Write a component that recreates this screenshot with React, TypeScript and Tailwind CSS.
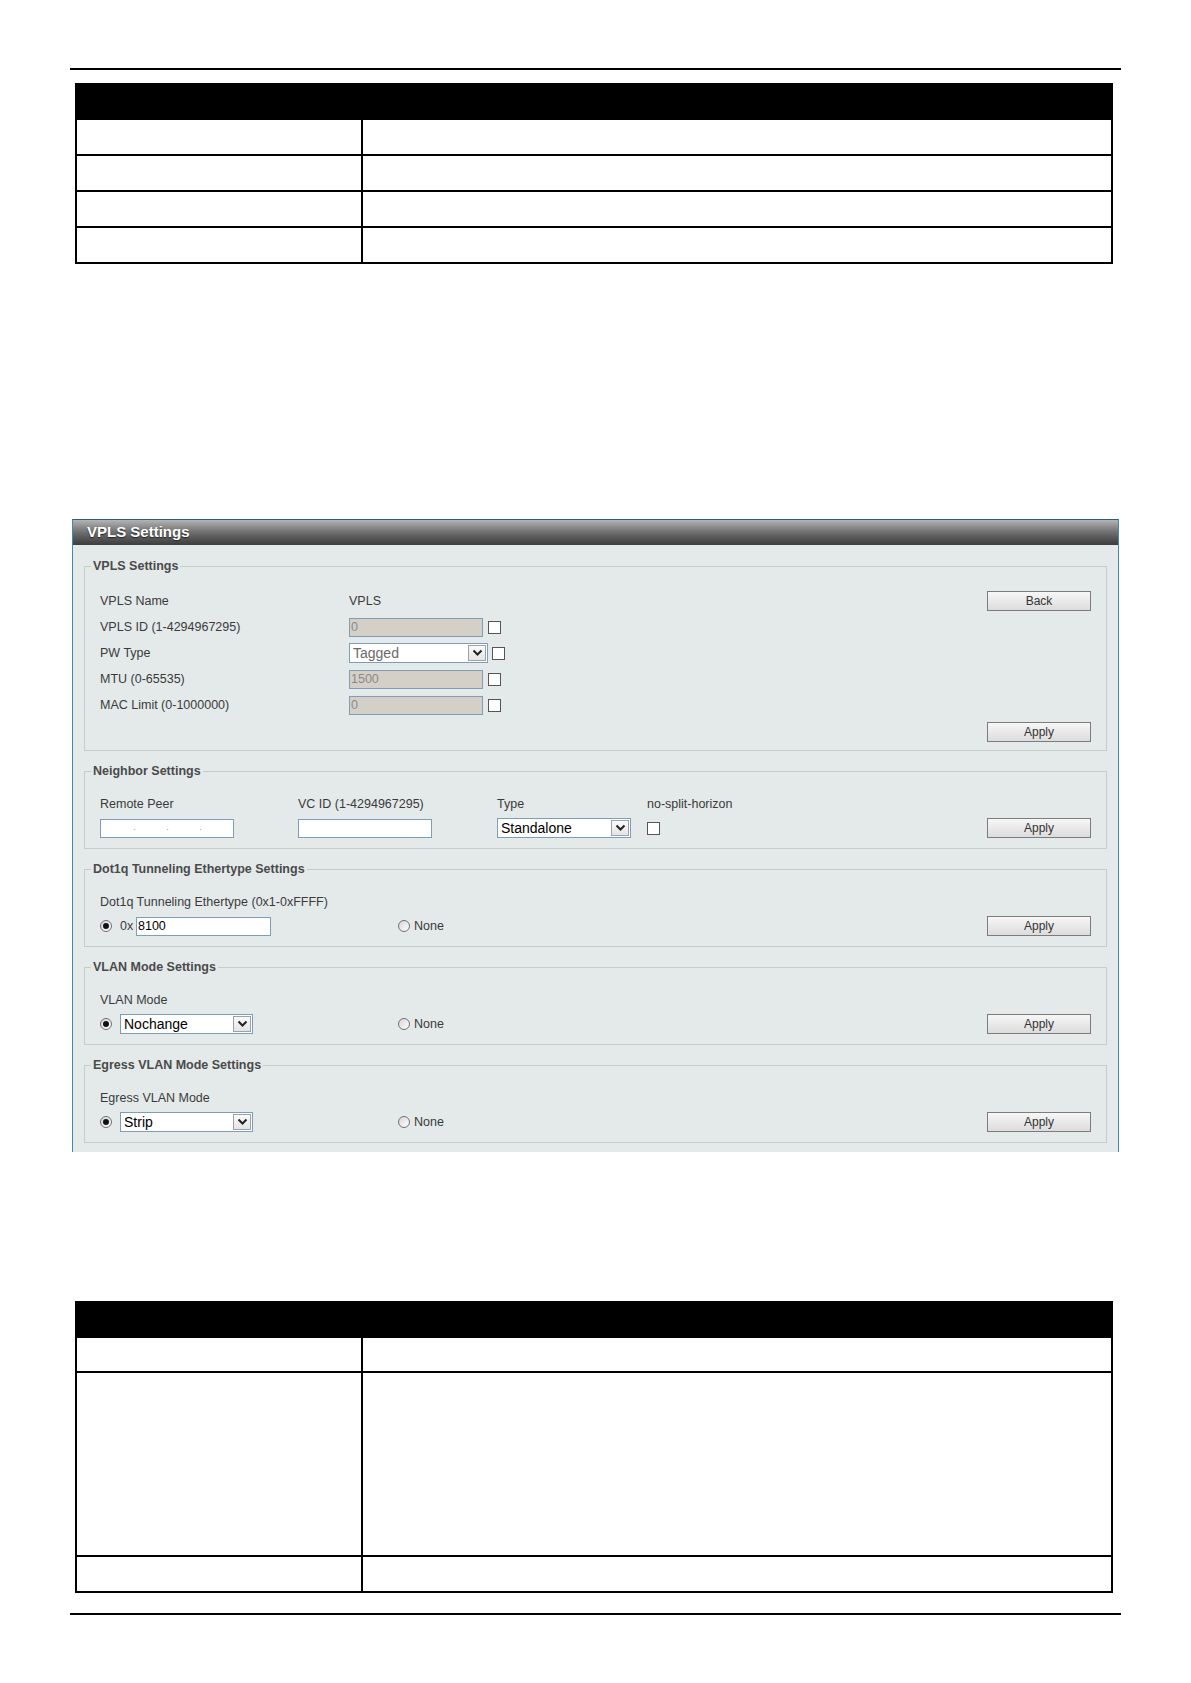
import React from 'react'

const sans = "font-['Liberation_Sans',Arial,sans-serif]"

function CheckBox() {
    return <span className="block w-[13px] h-[13px] border border-[#555] bg-white shrink-0" />
}

function Radio({ on }: { on?: boolean }) {
    return (
        <span className="inline-flex w-[12px] h-[12px] rounded-full border border-[#707070] bg-gradient-to-br from-[#d6d6d6] to-white items-center justify-center shrink-0">
            {on && <span className="w-[6px] h-[6px] rounded-full bg-[#111]" />}
        </span>
    )
}

function Btn({ label }: { label: string }) {
    return (
        <div className="w-[104px] h-[20px] border border-[#7c7c7c] bg-gradient-to-b from-[#f7f7f7] to-[#dcdcdc] flex items-center justify-center text-[12px] text-[#333] shrink-0">
            {label}
        </div>
    )
}

function TextBox({ w, value, disabled }: { w: string; value?: React.ReactNode; disabled?: boolean }) {
    return (
        <div className={`${w} h-[19px] border border-[#7f9db9] flex items-center pl-[1px] text-[12.5px] shrink-0 ${disabled ? 'bg-[#d4d0c8] text-[#8a8a8a]' : 'bg-white text-black'}`}>
            {value}
        </div>
    )
}

function Select({ w, value, gray }: { w: string; value: string; gray?: boolean }) {
    return (
        <div className={`${w} h-[20px] border border-[#7f9db9] bg-white flex items-center justify-between pl-[3px] pr-[1px] shrink-0`}>
            <span className={`text-[14px] ${gray ? 'text-[#6a6a6a]' : 'text-black'}`}>{value}</span>
            <span className="w-[18px] h-[16px] border border-[#9aa3ad] bg-gradient-to-b from-[#fafafa] to-[#e4e4e4] flex items-center justify-center">
                <svg width="11" height="8" viewBox="0 0 11 8">
                    <path d="M1.5 1.5 L5.5 5.5 L9.5 1.5" fill="none" stroke="#222" strokeWidth="2" />
                </svg>
            </span>
        </div>
    )
}

function Group({ title, children }: { title: string; children: React.ReactNode }) {
    return (
        <fieldset className="border border-[#c6cccc] mt-[12px] first:mt-0">
            <legend className="ml-[6px] px-[2px] text-[12.5px] leading-[16px] font-bold text-[#4a4a4a]">{title}</legend>
            <div className="px-[15px]">{children}</div>
        </fieldset>
    )
}

function Table({ rows }: { rows: number[] }) {
    return (
        <div className="ml-[75px] w-[1038px] border-2 border-black">
            <div className="h-[33px] bg-black" />
            {rows.map((h, i) => (
                <div key={i} className="flex border-t-2 border-black" style={{ height: h }}>
                    <div className="w-[286px] border-r-2 border-black" />
                    <div className="flex-1" />
                </div>
            ))}
        </div>
    )
}

export default function App() {
    return (
        <div className={`${sans} w-[1191px] h-[1683px] bg-white pt-[68px]`}>
            <div className="ml-[70px] w-[1051px] h-[2px] bg-black" />

            <div className="mt-[13px]">
                <Table rows={[36, 36, 36, 36]} />
            </div>

            {/* settings panel */}
            <div className="ml-[72px] mt-[255px] w-[1047px] border-x border-t border-x-[#4686b6] border-t-[#2e5d7c] bg-[#e4eaea]">
                <div className="h-[25px] bg-gradient-to-b from-[#b4b4b4] via-[#6e6e6e] to-[#3c3c3c] flex items-center pl-[14px]">
                    <span className="text-[15px] font-bold text-white [text-shadow:0_1px_1px_#222]">VPLS Settings</span>
                </div>

                <div className="px-[11px] pt-[13px] pb-[9px] text-[12.5px] text-[#3a3a3a]">
                    <Group title="VPLS Settings">
                        <div className="pt-[14px] pb-[8px]">
                            <div className="flex">
                                <div className="flex-1">
                                    <div className="h-[26px] flex items-center">
                                        <span className="w-[249px]">VPLS Name</span>
                                        <span>VPLS</span>
                                    </div>
                                    <div className="h-[26px] flex items-center">
                                        <span className="w-[249px]">VPLS ID (1-4294967295)</span>
                                        <TextBox w="w-[134px]" value="0" disabled />
                                        <span className="ml-[5px]"><CheckBox /></span>
                                    </div>
                                    <div className="h-[26px] flex items-center">
                                        <span className="w-[249px]">PW Type</span>
                                        <Select w="w-[139px]" value="Tagged" gray />
                                        <span className="ml-[4px]"><CheckBox /></span>
                                    </div>
                                    <div className="h-[26px] flex items-center">
                                        <span className="w-[249px]">MTU (0-65535)</span>
                                        <TextBox w="w-[134px]" value="1500" disabled />
                                        <span className="ml-[5px]"><CheckBox /></span>
                                    </div>
                                    <div className="h-[26px] flex items-center">
                                        <span className="w-[249px]">MAC Limit (0-1000000)</span>
                                        <TextBox w="w-[134px]" value="0" disabled />
                                        <span className="ml-[5px]"><CheckBox /></span>
                                    </div>
                                </div>
                                <div className="pt-[3px]">
                                    <Btn label="Back" />
                                </div>
                            </div>
                            <div className="mt-[4px] flex justify-end">
                                <Btn label="Apply" />
                            </div>
                        </div>
                    </Group>

                    <Group title="Neighbor Settings">
                        <div className="pt-[17px] pb-[10px]">
                            <div className="flex h-[16px] items-center">
                                <span className="w-[198px]">Remote Peer</span>
                                <span className="w-[199px]">VC ID (1-4294967295)</span>
                                <span className="w-[150px]">Type</span>
                                <span>no-split-horizon</span>
                            </div>
                            <div className="mt-[6px] flex h-[20px] items-center">
                                <div className="w-[198px]">
                                    <TextBox
                                        w="w-[134px]"
                                        value={
                                            <span className="flex w-full justify-around px-[16px] text-[9px] text-[#9a9a9a]">
                                                <span>.</span>
                                                <span>.</span>
                                                <span>.</span>
                                            </span>
                                        }
                                    />
                                </div>
                                <div className="w-[199px]">
                                    <TextBox w="w-[134px]" />
                                </div>
                                <div className="w-[150px]">
                                    <Select w="w-[134px]" value="Standalone" />
                                </div>
                                <CheckBox />
                                <div className="ml-auto">
                                    <Btn label="Apply" />
                                </div>
                            </div>
                        </div>
                    </Group>

                    <Group title="Dot1q Tunneling Ethertype Settings">
                        <div className="pt-[17px] pb-[10px]">
                            <div className="h-[16px] flex items-center">Dot1q Tunneling Ethertype (0x1-0xFFFF)</div>
                            <div className="mt-[6px] flex h-[20px] items-center">
                                <div className="w-[298px] flex items-center">
                                    <Radio on />
                                    <span className="ml-[8px] w-[16px]">0x</span>
                                    <TextBox w="w-[135px]" value="8100" />
                                </div>
                                <Radio />
                                <span className="ml-[4px]">None</span>
                                <div className="ml-auto">
                                    <Btn label="Apply" />
                                </div>
                            </div>
                        </div>
                    </Group>

                    <Group title="VLAN Mode Settings">
                        <div className="pt-[17px] pb-[10px]">
                            <div className="h-[16px] flex items-center">VLAN Mode</div>
                            <div className="mt-[6px] flex h-[20px] items-center">
                                <div className="w-[298px] flex items-center">
                                    <Radio on />
                                    <span className="ml-[8px]"><Select w="w-[133px]" value="Nochange" /></span>
                                </div>
                                <Radio />
                                <span className="ml-[4px]">None</span>
                                <div className="ml-auto">
                                    <Btn label="Apply" />
                                </div>
                            </div>
                        </div>
                    </Group>

                    <Group title="Egress VLAN Mode Settings">
                        <div className="pt-[17px] pb-[10px]">
                            <div className="h-[16px] flex items-center">Egress VLAN Mode</div>
                            <div className="mt-[6px] flex h-[20px] items-center">
                                <div className="w-[298px] flex items-center">
                                    <Radio on />
                                    <span className="ml-[8px]"><Select w="w-[133px]" value="Strip" /></span>
                                </div>
                                <Radio />
                                <span className="ml-[4px]">None</span>
                                <div className="ml-auto">
                                    <Btn label="Apply" />
                                </div>
                            </div>
                        </div>
                    </Group>
                </div>
            </div>

            <div className="mt-[149px]">
                <Table rows={[35, 184, 36]} />
            </div>

            <div className="ml-[70px] mt-[20px] w-[1051px] h-[2px] bg-black" />
        </div>
    )
}
